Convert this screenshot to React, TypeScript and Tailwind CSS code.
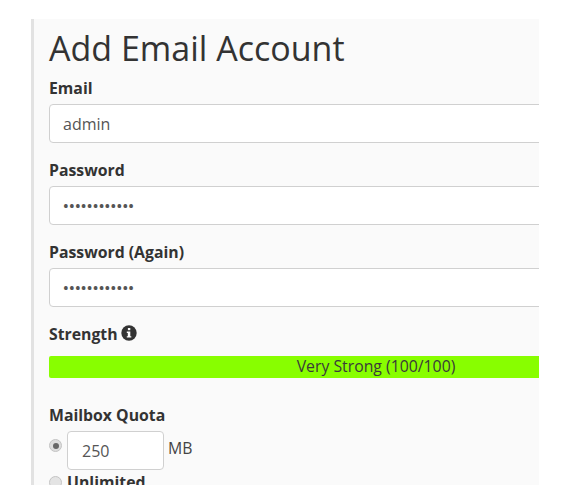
import React from "react";

const Label = ({ children }: { children: React.ReactNode }) => (
  <div className="text-[15.8px] leading-[20px] font-bold text-[#333333]">{children}</div>
);

const Field = ({ value, pw }: { value: string; pw?: boolean }) => (
  <div className="mt-[6px] w-[520px] h-[39px] bg-white border border-[#d0d0d0] rounded-[4px] pl-[13px] flex items-center text-[16px] text-[#555555]">
    {pw ? <span className="text-[15px] tracking-[0.3px] text-[#555555] font-semibold">{value}</span> : value}
  </div>
);

export default function App() {
  return (
    <div className="w-[567px] h-[498px] bg-white pt-[19px] pl-[31px] overflow-hidden font-['Open_Sans',sans-serif]">
      <div className="w-[508px] h-[466px] bg-[#fafafa] border-l-[3px] border-[#e2e2e2] pl-[15px] overflow-hidden">
        <h1 className="text-[34px] leading-[50px] mt-[4px] font-normal text-[#333333]">Add Email Account</h1>
        <div className="mt-[5px]"><Label>Email</Label></div>
        <Field value="admin" />
        <div className="mt-[17px]"><Label>Password</Label></div>
        <Field value="••••••••••••" pw />
        <div className="mt-[17px]"><Label>Password (Again)</Label></div>
        <Field value="••••••••••••" pw />
        <div className="mt-[17px] flex items-center gap-[3px]">
          <Label>Strength</Label>
          <svg width="16" height="16" viewBox="0 0 16 16" className="mb-[3px]">
            <circle cx="8" cy="8" r="7.7" fill="#333333" />
            <rect x="6.9" y="3" width="2.4" height="2.2" fill="#fafafa" />
            <path d="M5.8 6.6h3.5v4.6h1v1.4H5.8v-1.4h1V8H5.8z" fill="#fafafa" />
          </svg>
        </div>
        <div className="mt-[12px] w-[520px] h-[22px] bg-[#88fe00] rounded-[2px] flex items-center text-[15.8px] text-[#3a3a3a]">
          <span className="w-[654px] shrink-0 text-center">Very Strong (100/100)</span>
        </div>
        <div className="mt-[27px]"><Label>Mailbox Quota</Label></div>
        <div className="mt-[6px] flex items-start">
          <span className="mt-[8px] w-[13px] h-[13px] rounded-full bg-[#dddddd] border border-[#c4c4c4] flex items-center justify-center">
            <span className="w-[6px] h-[6px] rounded-full bg-[#666666]" />
          </span>
          <div className="ml-[5px] w-[97px] h-[39px] bg-white border border-[#d0d0d0] rounded-[4px] pl-[14px] flex items-center text-[16px] text-[#555555]">250</div>
          <span className="ml-[4px] mt-[7px] text-[15.8px] leading-[20px] text-[#444444]">MB</span>
        </div>
        <div className="mt-[2px] flex items-center">
          <span className="w-[13px] h-[13px] rounded-full bg-[#e4e4e4] border border-[#c4c4c4]" />
          <span className="ml-[5px] text-[15.8px] leading-[20px] font-bold text-[#333333]">Unlimited</span>
        </div>
      </div>
    </div>
  );
}
